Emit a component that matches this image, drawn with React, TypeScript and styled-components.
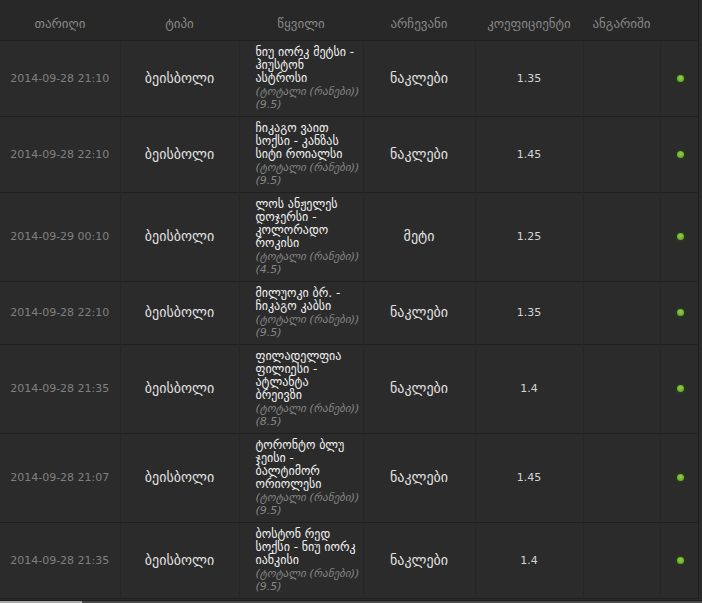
import React from "react";
import styled, { createGlobalStyle } from "styled-components";

interface IBet {
  date: string;
  sport: string;
  event: string[];
  market: string;
  line: string;
  choice: string;
  odds: string;
}

const bets: IBet[] = [
  {
    date: "2014-09-28 21:10",
    sport: "ბეისბოლი",
    event: ["ნიუ იორკ მეტსი -", "ჰიუსტონ", "ასტროსი"],
    market: "(ტოტალი (რანები))",
    line: "(9.5)",
    choice: "ნაკლები",
    odds: "1.35",
  },
  {
    date: "2014-09-28 22:10",
    sport: "ბეისბოლი",
    event: ["ჩიკაგო ვაით", "სოქსი - კანზას", "სიტი როიალსი"],
    market: "(ტოტალი (რანები))",
    line: "(9.5)",
    choice: "ნაკლები",
    odds: "1.45",
  },
  {
    date: "2014-09-29 00:10",
    sport: "ბეისბოლი",
    event: ["ლოს ანჟელეს", "დოჯერსი -", "კოლორადო", "როკისი"],
    market: "(ტოტალი (რანები))",
    line: "(4.5)",
    choice: "მეტი",
    odds: "1.25",
  },
  {
    date: "2014-09-28 22:10",
    sport: "ბეისბოლი",
    event: ["მილუოკი ბრ. -", "ჩიკაგო კაბსი"],
    market: "(ტოტალი (რანები))",
    line: "(9.5)",
    choice: "ნაკლები",
    odds: "1.35",
  },
  {
    date: "2014-09-28 21:35",
    sport: "ბეისბოლი",
    event: ["ფილადელფია", "ფილიესი -", "ატლანტა", "ბრეივზი"],
    market: "(ტოტალი (რანები))",
    line: "(8.5)",
    choice: "ნაკლები",
    odds: "1.4",
  },
  {
    date: "2014-09-28 21:07",
    sport: "ბეისბოლი",
    event: ["ტორონტო ბლუ", "ჯეისი -", "ბალტიმორ", "ორიოლესი"],
    market: "(ტოტალი (რანები))",
    line: "(9.5)",
    choice: "ნაკლები",
    odds: "1.45",
  },
  {
    date: "2014-09-28 21:35",
    sport: "ბეისბოლი",
    event: ["ბოსტონ რედ", "სოქსი - ნიუ იორკ", "იანკისი"],
    market: "(ტოტალი (რანები))",
    line: "(9.5)",
    choice: "ნაკლები",
    odds: "1.4",
  },
];

const columns = [
  { title: "თარიღი", width: 120 },
  { title: "ტიპი", width: 119 },
  { title: "წყვილი", width: 124 },
  { title: "არჩევანი", width: 112 },
  { title: "კოეფიციენტი", width: 108 },
  { title: "ანგარიში", width: 77 },
  { title: "", width: 38 },
];

export default function App() {
  return (
    <>
      <GlobalStyle />
      <Wrapper>
        <Table>
          <colgroup>
            {columns.map((c, i) => (
              <col key={i} style={{ width: c.width }} />
            ))}
          </colgroup>
          <thead>
            <tr>
              {columns.map((c, i) => (
                <HeadCell key={i}>{c.title}</HeadCell>
              ))}
            </tr>
          </thead>
          <tbody>
            {bets.map((bet, i) => (
              <Row key={i}>
                <DateCell>{bet.date}</DateCell>
                <TextCell>{bet.sport}</TextCell>
                <EventCell>
                  {bet.event.map((l, j) => (
                    <Line key={j}>{l}</Line>
                  ))}
                  <Market>{bet.market}</Market>
                  <Market>{bet.line}</Market>
                </EventCell>
                <TextCell>{bet.choice}</TextCell>
                <OddsCell>{bet.odds}</OddsCell>
                <Cell />
                <Cell>
                  <StatusDot />
                </Cell>
              </Row>
            ))}
          </tbody>
        </Table>
        <ScrollTrack>
          <ScrollThumb />
        </ScrollTrack>
      </Wrapper>
    </>
  );
}

const GlobalStyle = createGlobalStyle`
  body {
    margin: 0;
    background: #2b2b2b;
    font-family: "DejaVu Sans", "Noto Sans", sans-serif;
    font-size: 11px;
  }
`;

const Wrapper = styled.div`
  width: 702px;
  height: 603px;
  overflow: hidden;
  background: #2b2b2b;
  display: flex;
  flex-direction: column;
`;

const Table = styled.table`
  width: 698px;
  flex-shrink: 0;
  border-collapse: collapse;
  table-layout: fixed;
  border-right: 1px solid #1e1e1e;
  margin-bottom: 1px;
`;

const HeadCell = styled.th`
  height: 40px;
  padding: 7px 0 0;
  box-sizing: border-box;
  background: #282828;
  color: #868686;
  font-weight: normal;
  font-size: 13px;
  text-align: center;
  white-space: nowrap;
  border-bottom: 1px solid #1f1f1f;
`;

const Row = styled.tr`
  border-top: 1px solid #363636;
  border-bottom: 1px solid #1f1f1f;
`;

const Cell = styled.td`
  padding: 5px 4px;
  line-height: 13px;
  text-align: center;
  vertical-align: middle;
  color: #e2e2e2;
  border-left: 1px solid #262626;
  &:first-child {
    border-left: none;
  }
`;

const DateCell = styled(Cell)`
  color: #808080;
  white-space: nowrap;
`;

const TextCell = styled(Cell)`
  font-size: 14px;
  color: #e2e2e2;
`;

const OddsCell = styled(Cell)`
  color: #d4d4d4;
`;

const EventCell = styled(Cell)`
  text-align: left;
  padding: 5px 0 5px 16px;
  color: #f2f2f2;
  white-space: nowrap;
`;

const Line = styled.span`
  display: block;
  font-size: 12px;
`;

const Market = styled.span`
  display: block;
  color: #858585;
  font-style: italic;
`;

const StatusDot = styled.span`
  display: inline-block;
  width: 7px;
  height: 7px;
  margin-left: 2px;
  border-radius: 50%;
  background: radial-gradient(circle at 50% 40%, #8fd048, #5a9a1e);
  box-shadow: 0 0 3px 1px rgba(40, 70, 20, 0.8);
`;

const ScrollTrack = styled.div`
  flex-shrink: 0;
  height: 8px;
  background: #4a4a4a;
  border-top: 1px solid #1c1c1c;
`;

const ScrollThumb = styled.div`
  width: 82px;
  height: 100%;
  background: #a9a9a9;
`;
